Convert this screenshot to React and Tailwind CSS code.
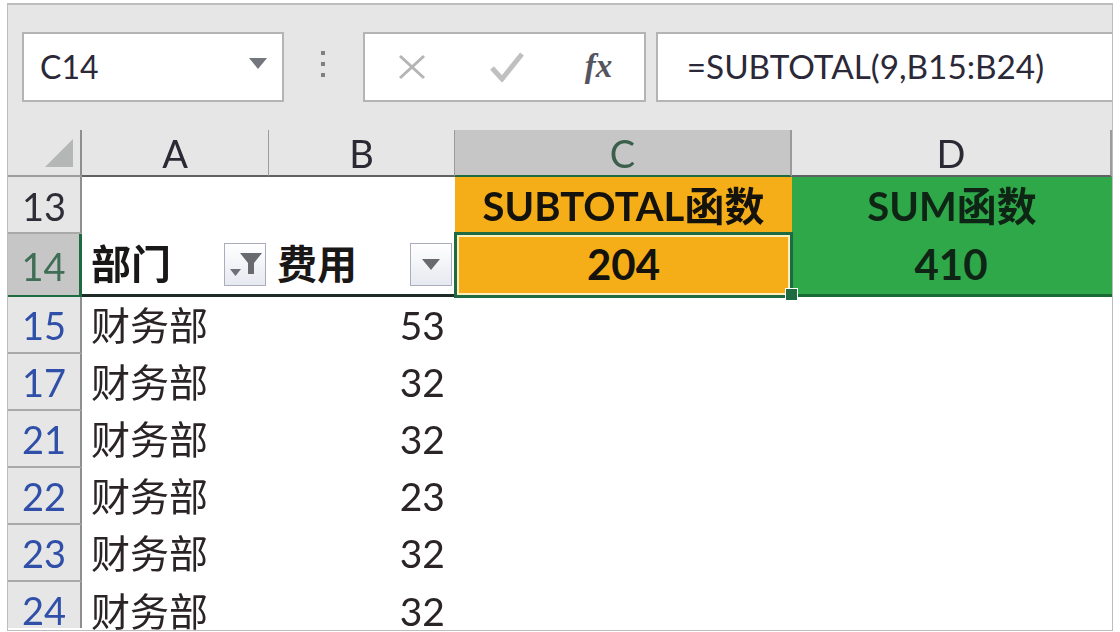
import React from 'react';

const FONT = { fontFamily: 'Lato, "Noto Sans CJK SC", sans-serif' };

const rows = [
  { id: 15, value: 53 },
  { id: 17, value: 32 },
  { id: 21, value: 32 },
  { id: 22, value: 23 },
  { id: 23, value: 32 },
  { id: 24, value: 32 },
];

const Caret = ({ className }) => (
  <svg viewBox="0 0 18 11" className={className}>
    <path d="M0 0h18L9 11z" fill="currentColor" />
  </svg>
);

const ColHead = ({ label, active, last }) => (
  <div
    className={`flex items-end justify-center h-[47px] border-b-2 text-[38px] leading-[44px] ${
      active
        ? 'bg-[#c6c6c6] text-[#3a5f4c] border-[#1f6b41] border-r-2 border-r-[#9a9a9a]'
        : 'border-[#5f6265] text-[#2b2a34] border-r border-r-[#9c9c9c]'
    } ${last ? 'border-r-2' : ''}`}
  >
    {label}
  </div>
);

const RowHead = ({ id, className = '' }) => (
  <div
    className={`flex items-center justify-center w-[74px] shrink-0 border-r-2 border-b-2 border-r-[#8f8f8f] border-b-[#a9a9a9] text-[38px] bg-[#e6e6e6] ${className}`}
  >
    {id}
  </div>
);

const FilterBtn = ({ children }) => (
  <div className="w-[42px] h-[43px] flex items-center justify-center border border-[#a9adbd] bg-gradient-to-b from-[#ffffff] to-[#e6e9f0]">
    {children}
  </div>
);

export default function App() {
  return (
    <div className="w-[1120px] h-[632px] bg-white pt-[3px] pl-[7px] pr-[7px] blur-[0.5px]" style={FONT}>
      <div className="h-[628px] bg-white border-t-2 border-l border-r border-b border-[#bdbdbd]">
        {/* formula bar */}
        <div className="h-[125px] bg-[#e6e6e6] flex items-start pt-[27px] pl-[14px]">
          <div className="w-[263px] h-[70px] bg-white border-2 border-[#b4b4b4] flex items-center justify-between pl-[16px] pr-[15px] text-[32px] text-[#2b2838]">
            <span>C14</span>
            <Caret className="w-[18px] h-[11px] text-[#73767c] mb-[7px]" />
          </div>
          <div className="w-[79px] h-[70px] flex flex-col items-center justify-center gap-[7px] pb-[6px]">
            <span className="w-[4px] h-[4px] bg-[#808080]" />
            <span className="w-[4px] h-[4px] bg-[#808080]" />
            <span className="w-[4px] h-[4px] bg-[#808080]" />
          </div>
          <div className="w-[284px] h-[70px] bg-white border-2 border-[#b4b4b4] flex items-center pl-[33px]">
            <svg viewBox="0 0 28 26" className="w-[28px] h-[26px] text-[#b5b5b5]">
              <path d="M2 2l24 22M26 2L2 24" stroke="currentColor" strokeWidth="3" fill="none" />
            </svg>
            <svg viewBox="0 0 34 30" className="w-[34px] h-[30px] ml-[64px] text-[#c0c0c0]">
              <path d="M2 16l10 11L32 2" stroke="currentColor" strokeWidth="5" fill="none" />
            </svg>
            <span className="ml-[61px] text-[33px] italic font-bold text-[#55555f]" style={{ fontFamily: '"Liberation Serif", serif' }}>
              fx
            </span>
          </div>
          <div className="w-[458px] h-[70px] ml-[10px] bg-white border-2 border-r-0 border-[#b4b4b4] flex items-center pl-[29px] text-[33.3px] text-[#2b2838]">
            =SUBTOTAL(9,B15:B24)
          </div>
        </div>

        {/* column headers */}
        <div className="grid grid-cols-[74px_187px_186px_337px_320px_1fr] bg-[#e6e6e6]">
          <div className="h-[47px] flex items-end justify-end pr-[7px] pb-[8px] border-r-2 border-b-2 border-r-[#8f8f8f] border-b-[#9c9c9c]">
            <svg viewBox="0 0 28 28" className="w-[28px] h-[28px]">
              <path d="M28 0v28H0z" fill="#b5b7b7" />
            </svg>
          </div>
          <ColHead label="A" />
          <ColHead label="B" />
          <ColHead label="C" active />
          <ColHead label="D" last />
          <div className="bg-white" />
        </div>

        {/* rows 13 and 14 */}
        <div className="relative">
          <div className="flex h-[57px]">
            <RowHead id={13} className="text-[#2f2e38] leading-none pt-[3px]" />
            <div className="w-[373px] bg-white" />
            <div className="w-[337px] bg-[#f5ae17] flex items-center justify-center text-[40px] leading-none font-bold text-[#14120c]">
              SUBTOTAL函数
            </div>
            <div className="w-[320px] bg-[#2fa84a] flex items-center justify-center text-[40px] leading-none font-bold text-[#0e2415]">
              SUM函数
            </div>
          </div>
          <div className="flex h-[63px]">
            <RowHead id={14} className="!bg-[#c6c6c6] text-[#3f6d55] leading-none pt-[3px] !border-r-[#1f6b41] !border-r-[3px] !border-b-[#1f6b41]" />
            <div className="w-[187px] bg-white border-b-[3px] border-[#1e2a25] flex items-center justify-between pl-[9px] pr-[3px]">
              <span className="text-[40px] leading-none font-bold text-[#1a1717]">部门</span>
              <FilterBtn>
                <svg viewBox="0 0 34 26" className="w-[34px] h-[26px]">
                  <path d="M2 18h11l-5.500 7z" fill="#6d7078" />
                  <path d="M12 2h22l-8 10v11h-6V12z" fill="#686a70" />
                </svg>
              </FilterBtn>
            </div>
            <div className="w-[186px] bg-white border-b-[3px] border-[#1e2a25] flex items-center justify-between pl-[8px] pr-[3px]">
              <span className="text-[40px] leading-none font-bold text-[#1a1717]">费用</span>
              <FilterBtn>
                <Caret className="w-[18px] h-[11px] text-[#686a70]" />
              </FilterBtn>
            </div>
            <div className="w-[337px] bg-[#f5ae17] pb-[4px] flex items-center justify-center text-[42px] leading-none font-bold text-[#14120c]">
              204
            </div>
            <div className="w-[320px] bg-[#2fa84a] border-b-[3px] border-[#1a6a35] pr-[2px] flex items-center justify-center text-[42px] leading-none font-bold text-[#0e2415]">
              410
            </div>
          </div>

          {/* active cell outline and fill handle */}
          <div className="absolute left-[446px] top-[55px] w-[339px] h-[66px] border-[3px] border-[#1f6b41] outline-2 -outline-offset-5 outline-[#fdf0c0]" />
          <div className="absolute left-[777px] top-[111px] w-[13px] h-[13px] bg-[#1f6b41] border border-white" />
        </div>

        {/* data rows, the last one stops at the window bottom */}
        {rows.map((row, i) => {
          const isLast = i === rows.length - 1;
          return (
            <div key={row.id} className={`flex ${isLast ? 'h-[46px]' : 'h-[57px]'}`}>
              <RowHead id={row.id} className={`text-[#2f4fa8] ${isLast ? 'leading-[34px] pt-[9px] !border-b-0' : 'leading-none'}`} />
              <div className={`w-[187px] bg-white flex items-center pl-[9px] text-[39px] text-[#2a2427] ${isLast ? 'leading-[34px] pt-[11px]' : 'leading-none'}`}>财务部</div>
              <div className={`w-[176px] bg-white flex items-center justify-end text-[39px] text-[#2a2427] ${isLast ? 'leading-[34px] pt-[11px]' : 'leading-none'}`}>{row.value}</div>
            </div>
          );
        })}
      </div>
    </div>
  );
}
